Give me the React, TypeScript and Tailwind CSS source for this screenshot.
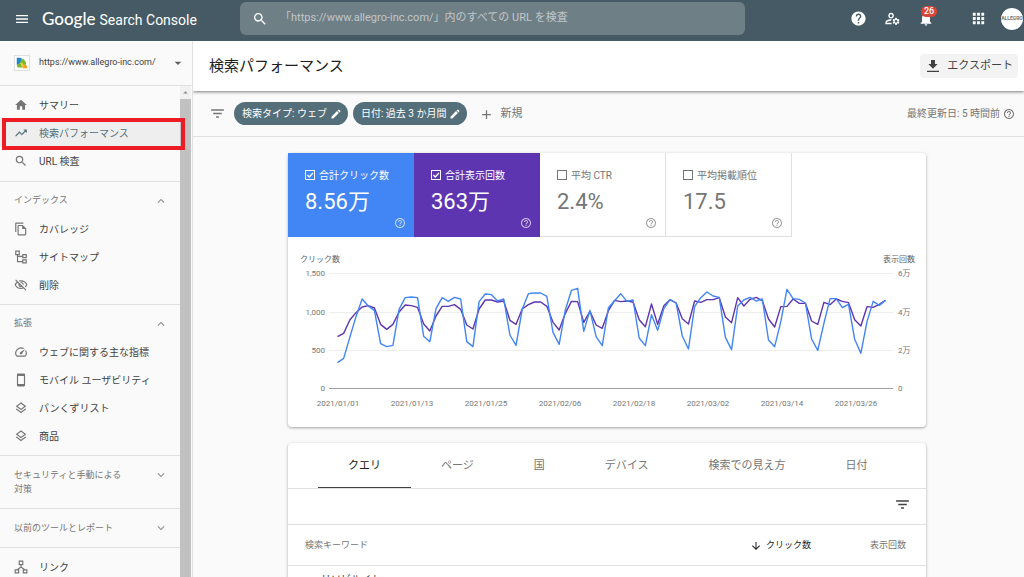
import { useState } from "react";
import type { ReactNode } from "react";
import {
  MdAdd,
  MdApps,
  MdArrowDownward,
  MdArrowDropDown,
  MdArrowDropUp,
  MdEdit,
  MdExpandLess,
  MdExpandMore,
  MdFilterList,
  MdHelp,
  MdHelpOutline,
  MdHome,
  MdMenu,
  MdNotifications,
  MdOutlineFileCopy,
  MdOutlineLayers,
  MdOutlineManageAccounts,
  MdOutlineVisibilityOff,
  MdSearch,
  MdSpeed,
  MdStayPrimaryPortrait,
  MdTrendingUp,
} from "react-icons/md";

// vertical position of each day, three units per chart pixel
const CLICKS = [
  338, 325, 262, 200, 147, 168, 182, 281, 290, 286, 178, 143, 141, 143, 259, 275, 176, 143, 154, 142, 147, 275, 290,
  155, 132, 134, 153, 147, 255, 286, 178, 131, 129, 129, 139, 247, 283, 180, 121, 115, 244, 181, 260, 287, 173, 152,
  131, 154, 150, 264, 287, 194, 241, 176, 149, 159, 258, 297, 170, 143, 126, 138, 142, 262, 299, 168, 150, 142, 153,
  147, 270, 290, 215, 118, 146, 148, 159, 267, 301, 220, 146, 146, 173, 163, 268, 310, 215, 154, 166, 151,
];

const IMPRESSIONS = [
  260, 250, 210, 188, 171, 167, 174, 223, 238, 223, 186, 165, 167, 172, 222, 243, 198, 169, 169, 164, 178, 225, 237,
  177, 150, 150, 156, 153, 211, 223, 177, 164, 156, 156, 169, 217, 240, 190, 154, 155, 217, 184, 225, 235, 182, 151,
  155, 153, 156, 209, 230, 162, 223, 167, 149, 159, 206, 222, 153, 157, 149, 149, 143, 201, 218, 143, 168, 148, 142,
  152, 207, 231, 170, 169, 147, 160, 160, 213, 223, 157, 164, 147, 154, 158, 209, 228, 170, 172, 163, 151,
];

const DATES = [
  "2021/01/01",
  "2021/01/13",
  "2021/01/25",
  "2021/02/06",
  "2021/02/18",
  "2021/03/02",
  "2021/03/14",
  "2021/03/26",
];

const GRID = [
  { y: 36, left: "1,500", right: "6万" },
  { y: 75, left: "1,000", right: "4万" },
  { y: 113, left: "500", right: "2万" },
  { y: 151, left: "0", right: "0" },
];

const TABS = ["クエリ", "ページ", "国", "デバイス", "検索での見え方", "日付"];

const toPoints = (values: number[]) => values.map((v, i) => `${49.5 + i * 6.157},${13 + v / 3}`).join(" ");

function SitemapIcon() {
  return (
    <svg viewBox="0 0 24 24" className="size-[14px]" fill="none" stroke="currentColor" strokeWidth="2">
      <path d="M3 2h6v6H3zM15 8h6v5h-6zM15 17h6v5h-6zM6 8v12h9M6 11h9" />
    </svg>
  );
}

function LinksIcon() {
  return (
    <svg viewBox="0 0 24 24" className="size-[14px]" fill="none" stroke="currentColor" strokeWidth="2">
      <path d="M9 2h6v6H9zM2 17h6v5H2zM16 17h6v5h-6zM12 8v5M5 17l7-5 7 5" />
    </svg>
  );
}

function DownloadIcon() {
  return (
    <svg viewBox="0 0 24 24" className="size-4 text-[#424242]" fill="currentColor">
      <path d="M19 9h-4V3H9v6H5l7 7zM3 19h18v2H3z" />
    </svg>
  );
}

function SiteIcon() {
  return (
    <svg viewBox="0 0 16 16" className="size-4 shrink-0 border border-[#e0e0e0] bg-white">
      <path d="M2 2h5l2 4-4 3-3 1z" fill="#1e88d2" />
      <path d="M7 3c3 0 5 2 6 6l-3 2-4-3z" fill="#7cb928" />
      <path d="M2 10l4-2 3 5H3z" fill="#7cb928" />
      <path d="M9 11l4-1 1 4H9z" fill="#f39c12" />
      <path d="M6 8l2-1 2 4-1 2z" fill="#f6c544" />
    </svg>
  );
}

function NavItem({ icon, label, active }: { icon: ReactNode; label: string; active?: boolean }) {
  return (
    <li className="relative">
      <a
        href="#"
        className={`flex h-7 items-center gap-[11px] pl-[14px] text-[10px] ${
          active ? "bg-[#eeeeee] text-[#546e7a]" : "text-[#424242]"
        }`}
      >
        <span className={`flex size-[14px] shrink-0 items-center justify-center ${active ? "" : "text-[#757575]"}`}>
          {icon}
        </span>
        {label}
      </a>
      {active && (
        <span className="pointer-events-none absolute -top-px -right-[5px] left-0.5 z-10 h-8 border-4 border-[#ed1c24]" />
      )}
    </li>
  );
}

function NavSection({ title, children }: { title: string; children: ReactNode }) {
  return (
    <section className="border-b border-[#e0e0e0] py-[5px]">
      <button type="button" className="flex h-7 w-full items-center justify-between pr-3 pl-[14px] text-[9px] text-[#757575]">
        {title}
        <MdExpandLess size={14} className="text-[#8f8f8f]" />
      </button>
      <ul>{children}</ul>
    </section>
  );
}

function CollapsedSection({ title }: { title: string }) {
  return (
    <section className="border-b border-[#e0e0e0]">
      <button
        type="button"
        className="flex w-full items-start justify-between py-3 pr-3 pl-[14px] text-left text-[9px] leading-[14px] text-[#757575]"
      >
        <span className="max-w-[112px]">{title}</span>
        <MdExpandMore size={14} className="shrink-0 text-[#8f8f8f]" />
      </button>
    </section>
  );
}

interface MetricProps {
  label: string;
  value: string;
  className: string;
  defaultChecked?: boolean;
}

function Metric({ label, value, className, defaultChecked = false }: MetricProps) {
  const [checked, setChecked] = useState(defaultChecked);

  return (
    <div className={`flex h-[84px] w-[126px] flex-col pt-[14px] pr-2 pl-[17px] ${className}`}>
      <label className="flex h-4 items-center gap-1 text-[10px] whitespace-nowrap">
        <span className="grid size-[10px] shrink-0">
          <input
            type="checkbox"
            checked={checked}
            onChange={(e) => setChecked(e.target.checked)}
            className="col-start-1 row-start-1 size-[10px] appearance-none border border-current"
          />
          {checked && (
            <svg
              viewBox="0 0 10 10"
              className="pointer-events-none col-start-1 row-start-1 size-[10px]"
              fill="none"
              stroke="currentColor"
              strokeWidth="1.3"
            >
              <path d="M2.3 5l2 2 3.6-4" />
            </svg>
          )}
        </span>
        {label}
      </label>
      <div className="mt-[5px] text-[22px] leading-7">{value}</div>
      <MdHelpOutline size={12} className="mt-px self-end opacity-70" />
    </div>
  );
}

function Chip({ label }: { label: string }) {
  return (
    <button
      type="button"
      className="flex h-[23px] items-center gap-[3px] rounded-full bg-[#546e7a] pr-[6px] pl-2 text-[10px] whitespace-nowrap text-white"
    >
      {label}
      <MdEdit size={12} />
    </button>
  );
}

function PerformanceChart() {
  return (
    <svg viewBox="0 0 638 190" className="block w-full" fill="#757575" fontSize="8">
      <text x="12" y="25" fill="#616161">
        クリック数
      </text>
      <text x="627" y="25" textAnchor="end" fill="#616161">
        表示回数
      </text>
      {GRID.map((g) => (
        <g key={g.y}>
          <rect x="41" y={g.y} width="564" height="1" fill={g.left === "0" ? "#9e9e9e" : "#eeeeee"} />
          <text x="37" y={g.y + 3} textAnchor="end">
            {g.left}
          </text>
          <text x="610" y={g.y + 3}>
            {g.right}
          </text>
        </g>
      ))}
      <polyline points={toPoints(IMPRESSIONS)} fill="none" stroke="#5e35b1" strokeWidth="1.4" strokeLinejoin="round" />
      <polyline points={toPoints(CLICKS)} fill="none" stroke="#4285f4" strokeWidth="1.4" strokeLinejoin="round" />
      {DATES.map((d, i) => (
        <text key={d} x={50 + i * 74} y="169" textAnchor="middle">
          {d}
        </text>
      ))}
    </svg>
  );
}

function Header() {
  return (
    <header className="flex h-[41px] shrink-0 items-center bg-[#455a64] pb-1 text-white">
      <div className="flex w-60 shrink-0 items-center gap-3 pl-[14px]">
        <button type="button" aria-label="メニュー">
          <MdMenu size={16} />
        </button>
        <div className="flex items-baseline gap-1 whitespace-nowrap">
          <span className="font-['Lato',sans-serif] text-[17px] font-medium">Google</span>
          <span className="text-[14px]">Search Console</span>
        </div>
      </div>
      <label className="flex h-[33px] max-w-[505px] flex-1 items-center gap-3 rounded-md bg-[#6f7f86] pl-3">
        <MdSearch size={16} />
        <input
          type="text"
          aria-label="URL を検査"
          placeholder="「https://www.allegro-inc.com/」内のすべての URL を検査"
          className="flex-1 bg-transparent text-[11px] outline-none placeholder:text-[#c0c7ca]"
        />
      </label>
      <div className="ml-auto flex items-center pr-px">
        <button type="button" aria-label="ヘルプ" className="mr-[17px]">
          <MdHelp size={17} />
        </button>
        <button type="button" aria-label="ユーザー設定" className="mr-[17px]">
          <MdOutlineManageAccounts size={17} />
        </button>
        <button type="button" aria-label="通知" className="relative mr-9">
          <MdNotifications size={16} />
          <span className="absolute -top-[5px] left-[3px] rounded-full bg-[#db4437] px-[3px] text-[9px] leading-[11px] font-medium">
            26
          </span>
        </button>
        <button type="button" aria-label="アプリ" className="mr-[14px]">
          <MdApps size={17} />
        </button>
        <button
          type="button"
          className="flex size-[22px] items-center justify-center rounded-full bg-white text-[5px] font-bold text-[#757575]"
        >
          ALLEGRO
        </button>
      </div>
    </header>
  );
}

function Sidebar() {
  return (
    <aside className="flex w-[193px] shrink-0 flex-col border-r border-[#e0e0e0] bg-[#fafafa]">
      <button
        type="button"
        className="flex h-[45px] shrink-0 items-center border-b border-[#e0e0e0] pr-[6px] pl-[14px] text-[9px] text-[#424242]"
      >
        <SiteIcon />
        <span className="ml-[9px]">https://www.allegro-inc.com/</span>
        <MdArrowDropDown size={16} className="ml-auto text-[#616161]" />
      </button>
      <div className="flex min-h-0 flex-1">
        <nav className="w-[180px] shrink-0">
          <ul className="border-b border-[#e0e0e0] pt-[5px] pb-[6px]">
            <NavItem icon={<MdHome size={14} />} label="サマリー" />
            <NavItem icon={<MdTrendingUp size={14} />} label="検索パフォーマンス" active />
            <NavItem icon={<MdSearch size={14} />} label="URL 検査" />
          </ul>
          <NavSection title="インデックス">
            <NavItem icon={<MdOutlineFileCopy size={14} />} label="カバレッジ" />
            <NavItem icon={<SitemapIcon />} label="サイトマップ" />
            <NavItem icon={<MdOutlineVisibilityOff size={14} />} label="削除" />
          </NavSection>
          <NavSection title="拡張">
            <NavItem icon={<MdSpeed size={14} />} label="ウェブに関する主な指標" />
            <NavItem icon={<MdStayPrimaryPortrait size={14} />} label="モバイル ユーザビリティ" />
            <NavItem icon={<MdOutlineLayers size={14} />} label="パンくずリスト" />
            <NavItem icon={<MdOutlineLayers size={14} />} label="商品" />
          </NavSection>
          <CollapsedSection title="セキュリティと手動による対策" />
          <CollapsedSection title="以前のツールとレポート" />
          <ul className="pt-[5px]">
            <NavItem icon={<LinksIcon />} label="リンク" />
          </ul>
        </nav>
        <div className="flex w-[11px] flex-col bg-[#f1f1f1]">
          <MdArrowDropUp size={11} className="my-px text-[#8a8a8a]" />
          <div className="flex-1 bg-[#c1c1c1]" />
        </div>
      </div>
    </aside>
  );
}

export default function App() {
  const [tab, setTab] = useState(TABS[0]);

  return (
    <div className="flex h-screen flex-col overflow-hidden bg-[#fafafa] font-['Roboto','Noto_Sans_CJK_JP',sans-serif] text-[#424242]">
      <Header />
      <div className="flex min-h-0 flex-1">
        <Sidebar />
        <main className="min-w-0 flex-1 overflow-hidden">
          <div className="relative z-10 flex h-[50px] items-center justify-between bg-white pr-[6px] pl-4 shadow-[0_1px_3px_rgba(0,0,0,0.5)]">
            <h1 className="text-[15px] text-[#212121]">検索パフォーマンス</h1>
            <button type="button" className="flex h-6 items-center gap-[6px] rounded-sm bg-[#f3f3f3] px-[5px] text-[11px]">
              <DownloadIcon />
              エクスポート
            </button>
          </div>

          <div className="flex h-[46px] items-center border-b border-[#e0e0e0] pr-[9px] pl-4 text-[#757575]">
            <MdFilterList size={17} className="mr-2" />
            <div className="flex gap-[5px]">
              <Chip label="検索タイプ: ウェブ" />
              <Chip label="日付: 過去 3 か月間" />
            </div>
            <button type="button" className="ml-3 flex items-center gap-[6px] pt-px text-[11px]">
              <MdAdd size={15} />
              新規
            </button>
            <div className="ml-auto flex items-center gap-[3px] text-[10px]">
              最終更新日: 5 時間前
              <MdHelpOutline size={12} />
            </div>
          </div>

          <div className="flex flex-col gap-4 pt-4 pr-[98px] pl-[95px]">
            <section className="rounded-sm bg-white shadow-[0_1px_3px_rgba(0,0,0,0.35)]">
              <div className="flex">
                <Metric label="合計クリック数" value="8.56万" className="bg-[#4285f4] text-white" defaultChecked />
                <Metric label="合計表示回数" value="363万" className="bg-[#5e35b1] text-white" defaultChecked />
                <Metric label="平均 CTR" value="2.4%" className="border-r border-b border-[#e0e0e0] text-[#757575]" />
                <Metric label="平均掲載順位" value="17.5" className="border-r border-b border-[#e0e0e0] text-[#757575]" />
              </div>
              <PerformanceChart />
            </section>

            <section className="rounded-sm bg-white shadow-[0_1px_3px_rgba(0,0,0,0.35)]">
              <div role="tablist" className="flex h-[46px] border-b border-[#e0e0e0] pl-[30px]">
                {TABS.map((t) => (
                  <button
                    key={t}
                    type="button"
                    role="tab"
                    aria-selected={t === tab}
                    onClick={() => setTab(t)}
                    className={`border-b px-[30px] pt-0.5 text-[11px] whitespace-nowrap ${
                      t === tab ? "border-[#424242] text-[#212121]" : "border-transparent text-[#757575]"
                    }`}
                  >
                    {t}
                  </button>
                ))}
              </div>
              <div className="flex h-9 items-center justify-end border-b border-[#e0e0e0] pr-[15px] pb-1">
                <button type="button" aria-label="フィルタ">
                  <MdFilterList size={17} />
                </button>
              </div>
              <table className="w-full text-[9px]">
                <thead>
                  <tr className="h-10 border-b border-[#e0e0e0] text-[#757575]">
                    <th className="pt-0.5 pl-[17px] text-left font-normal">検索キーワード</th>
                    <th className="w-28 pt-0.5 pr-5 font-normal text-[#212121]">
                      <span className="flex items-center justify-end gap-1">
                        <MdArrowDownward size={12} />
                        クリック数
                      </span>
                    </th>
                    <th className="w-[95px] pt-0.5 pr-5 text-right font-normal">表示回数</th>
                  </tr>
                </thead>
                <tbody>
                  <tr className="h-7">
                    <td colSpan={3} className="pl-[33px] text-[10px]">
                      リソビルイト
                    </td>
                  </tr>
                </tbody>
              </table>
            </section>
          </div>
        </main>
      </div>
    </div>
  );
}
